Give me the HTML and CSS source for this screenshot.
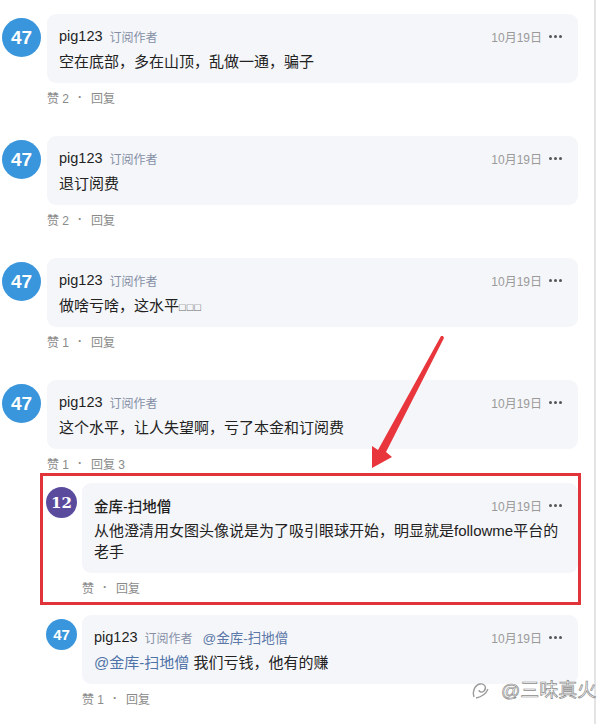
FILE: index.html
```html
<!DOCTYPE html>
<html lang="zh">
<head>
  <meta charset="UTF-8">
  <title>评论</title>
  <link rel="stylesheet" href="styles.css">
</head>
<body>
<div class="page">

  <div class="comment">
    <div class="avatar blue">47</div>
    <div class="main">
      <div class="card">
        <div class="head">
          <span class="name">pig123</span><span class="tag">订阅作者</span>
          <span class="date">10月19日</span><span class="more"><i></i><i></i><i></i></span>
        </div>
        <div class="text">空在底部，多在山顶，乱做一通，骗子</div>
      </div>
      <div class="actions"><span>赞 2</span><span class="dot">·</span><span>回复</span></div>
    </div>
  </div>

  <div class="comment">
    <div class="avatar blue">47</div>
    <div class="main">
      <div class="card">
        <div class="head">
          <span class="name">pig123</span><span class="tag">订阅作者</span>
          <span class="date">10月19日</span><span class="more"><i></i><i></i><i></i></span>
        </div>
        <div class="text">退订阅费</div>
      </div>
      <div class="actions"><span>赞 2</span><span class="dot">·</span><span>回复</span></div>
    </div>
  </div>

  <div class="comment">
    <div class="avatar blue">47</div>
    <div class="main">
      <div class="card">
        <div class="head">
          <span class="name">pig123</span><span class="tag">订阅作者</span>
          <span class="date">10月19日</span><span class="more"><i></i><i></i><i></i></span>
        </div>
        <div class="text">做啥亏啥，这水平<span class="tofu">□□□</span></div>
      </div>
      <div class="actions"><span>赞 1</span><span class="dot">·</span><span>回复</span></div>
    </div>
  </div>

  <div class="comment">
    <div class="avatar blue">47</div>
    <div class="main">
      <div class="card">
        <div class="head">
          <span class="name">pig123</span><span class="tag">订阅作者</span>
          <span class="date">10月19日</span><span class="more"><i></i><i></i><i></i></span>
        </div>
        <div class="text">这个水平，让人失望啊，亏了本金和订阅费</div>
      </div>
      <div class="actions"><span>赞 1</span><span class="dot">·</span><span>回复 3</span></div>
    </div>
  </div>

  <div class="replies">
    <div class="reply marked">
      <div class="avatar purple">12</div>
      <div class="main">
        <div class="card">
          <div class="head">
            <span class="name">金库-扫地僧</span>
            <span class="date">10月19日</span><span class="more"><i></i><i></i><i></i></span>
          </div>
          <div class="text">从他澄清用女图头像说是为了吸引眼球开始，明显就是followme平台的老手</div>
        </div>
        <div class="actions"><span>赞</span><span class="dot">·</span><span>回复</span></div>
      </div>
    </div>

    <div class="reply">
      <div class="avatar blue">47</div>
      <div class="main">
        <div class="card">
          <div class="head">
            <span class="name">pig123</span><span class="tag">订阅作者</span><span class="at">@金库-扫地僧</span>
            <span class="date">10月19日</span><span class="more"><i></i><i></i><i></i></span>
          </div>
          <div class="text"><span class="mention">@金库-扫地僧</span> 我们亏钱，他有的赚</div>
        </div>
        <div class="actions"><span>赞 1</span><span class="dot">·</span><span>回复</span></div>
      </div>
    </div>
  </div>

  <svg class="arrow" width="90" height="140" viewBox="360 330 90 140">
    <polygon points="443,336 444,338 386,452 392,457 372,468 372,446 378,450 441,336" fill="#e8363c"/>
  </svg>

</div>

<div class="mark">
  <svg width="20" height="24" viewBox="0 0 20 24">
    <path d="M4 20 C2 14 5 8 10 7 C15 6 17 11 14 14 C12 16 9 15 9 13" fill="none" stroke="#9a9a9a" stroke-width="1.3"/>
    <path d="M6 21 C11 20 16 17 18 12" fill="none" stroke="#9a9a9a" stroke-width="1.3"/>
  </svg>
  <span>@三味真火</span>
</div>
</body>
</html>
```

FILE: styles.css
```css
body { margin: 0; position: relative; background: #fff; font-family: "Liberation Sans", "Noto Sans CJK SC", sans-serif; color: #222; }
.page { position: relative; width: 596px; height: 724px; box-sizing: border-box; border-right: 2px solid #e4e4e4; padding: 14px 16px 0 2px; overflow: hidden; }

.comment { display: flex; gap: 6px; margin-bottom: 29px; }
.comment:nth-child(4) { margin-bottom: 0; }
.main { flex: 1; min-width: 0; }

.avatar { flex: none; width: 39px; height: 39px; margin-top: 4px; border-radius: 50%; color: #fff; font-weight: bold; font-size: 19px; display: flex; align-items: center; justify-content: center; }
.blue { background: #3a96dc; }
.purple { background: #5b4b9d; font-family: "DejaVu Serif", serif; font-size: 14px; }

.card { background: #f5f6f9; border-radius: 9px; padding: 12px 16px 11px 12px; }
.head { display: flex; align-items: center; height: 20px; }
.name { font-size: 14.5px; font-weight: 500; color: #1f1f1f; }
.tag { font-size: 12px; color: #8590a6; margin-left: 7px; }
.at { font-size: 13.5px; color: #5b78a8; margin-left: 10px; }
.date { margin-left: auto; font-size: 12px; color: #9a9a9a; }
.more { display: flex; gap: 2px; margin-left: 7px; }
.more i { width: 3px; height: 3px; border-radius: 50%; background: #555; }
.text { margin-top: 5px; font-size: 15px; line-height: 21px; color: #222; }
.tofu { font-size: 11px; line-height: 0; color: #666; letter-spacing: 1px; }
.mention { color: #4f73a8; }

.actions { margin-top: 4px; height: 20px; display: flex; align-items: center; font-size: 12px; color: #8a8a8a; }
.actions .dot { margin: 0 9px; font-weight: bold; }

.replies { margin-left: 44px; }
.reply { display: flex; gap: 5px; }
.reply .avatar { width: 31px; height: 31px; font-size: 15px; }
.reply.marked { border: 3px solid #e1343a; margin: 0 -3px 10px -6px; padding: 7px 0 5px 3px; }

.arrow { position: absolute; left: 360px; top: 330px; }
.mark { position: absolute; left: 470px; top: 675px; display: flex; align-items: center; gap: 11px; white-space: nowrap; font-size: 19px; color: #fff; -webkit-text-stroke: 0.7px #8c8c8c; }
```
